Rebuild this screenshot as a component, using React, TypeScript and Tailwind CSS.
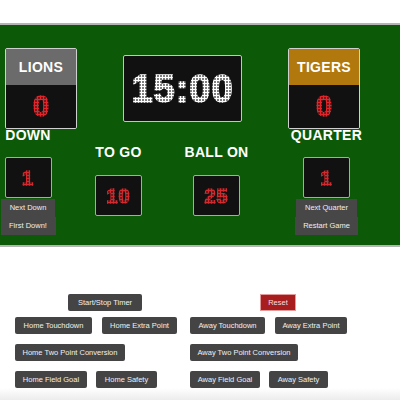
const dots =
  "[mask-image:radial-gradient(circle,#000_1.2px,transparent_1.6px)] [mask-size:3px_3px] [-webkit-text-stroke:1.5px_currentColor]";

const TeamBox = ({ name, score, header }: { name: string; score: number; header: string }) => (
  <div className="w-[72px] h-[81px] border border-[#d0d0d0] rounded-[2px] overflow-hidden flex flex-col">
    <div className={`h-[36px] ${header} flex items-center justify-center text-white font-bold text-[14px] tracking-[0.3px]`}>
      {name}
    </div>
    <div className="flex-1 bg-[#111] flex items-center justify-center">
      <span className={`text-[#e3262b] font-bold text-[29px] leading-none ${dots}`}>{score}</span>
    </div>
  </div>
);

const SmallBox = ({ value }: { value: number }) => (
  <div className="w-[47px] h-[41px] bg-[#111] border border-[#a9a9a9] rounded-[2px] flex items-center justify-center">
    <span className={`text-[#d42a2e] font-bold text-[20px] leading-none tracking-[1px] ${dots}`}>{value}</span>
  </div>
);

const Label = ({ text }: { text: string }) => (
  <div className="text-white font-bold text-[14px] leading-[14px] tracking-[0.3px] whitespace-nowrap">{text}</div>
);

const BoardButton = ({ text, w }: { text: string; w: string }) => (
  <button className={`${w} h-[18px] bg-[#474747] text-[#eee] text-[7.5px] flex items-center justify-center`}>
    {text}
  </button>
);

const Btn = ({ text, w }: { text: string; w: string }) => (
  <button
    className={`${w} h-[17px] bg-[#444] rounded-[2px] text-[#f0f0f0] text-[7.5px] flex items-center justify-center whitespace-nowrap`}
  >
    {text}
  </button>
);

export default function App() {
  return (
    <div className="w-[400px] h-[400px] bg-white overflow-hidden flex flex-col font-['Liberation_Sans',Arial,sans-serif]">
      <div className="mt-[23px] bg-[#0c5a07] border-y-2 border-[#b4b4b4] pt-[23px] pb-[10px]">
        {/* top row */}
        <div className="flex items-center pl-[5px]">
          <TeamBox name="LIONS" score={0} header="bg-[#6b6b6b]" />
          <div className="ml-[46px] w-[119px] h-[67px] bg-[#111] border border-[#c4c4c4] rounded-[2px] flex items-center justify-center">
            <span className={`text-white font-bold text-[38px] leading-none tracking-[1px] ${dots}`}>15:00</span>
          </div>
          <div className="ml-[46px]">
            <TeamBox name="TIGERS" score={0} header="bg-[#b1790d]" />
          </div>
        </div>

        {/* bottom row */}
        <div className="flex items-start -mt-[1px]">
          <div className="w-[56px] flex flex-col items-center">
            <Label text="DOWN" />
            <div className="mt-[15px]">
              <SmallBox value={1} />
            </div>
            <div className="mt-[1px] flex flex-col items-center">
              <BoardButton text="Next Down" w="w-[54px]" />
              <BoardButton text="First Down!" w="w-[55px]" />
            </div>
          </div>
          <div className="ml-[30px] mt-[17px] w-[65px] flex flex-col items-center">
            <Label text="TO GO" />
            <div className="mt-[16px]">
              <SmallBox value={10} />
            </div>
          </div>
          <div className="ml-[33px] mt-[17px] w-[65px] flex flex-col items-center">
            <Label text="BALL ON" />
            <div className="mt-[16px]">
              <SmallBox value={25} />
            </div>
          </div>
          <div className="ml-[42px] w-[71px] flex flex-col items-center">
            <Label text="QUARTER" />
            <div className="mt-[15px]">
              <SmallBox value={1} />
            </div>
            <div className="mt-[1px] flex flex-col items-center">
              <BoardButton text="Next Quarter" w="w-[61px]" />
              <BoardButton text="Restart Game" w="w-[63px]" />
            </div>
          </div>
        </div>
      </div>

      {/* controls */}
      <div className="mt-[47px] flex">
        <div className="ml-[68px]">
          <Btn text="Start/Stop Timer" w="w-[74px]" />
        </div>
        <button className="ml-[118px] w-[36px] h-[17px] bg-[#a81d1d] border border-[#e39a9a] text-[#f8dede] text-[7.5px] flex items-center justify-center">
          Reset
        </button>
      </div>
      <div className="mt-[6px] flex pl-[15px]">
        <div className="w-[175px] flex flex-col gap-[10px]">
          <div className="flex gap-[10px]">
            <Btn text="Home Touchdown" w="w-[77px]" />
            <Btn text="Home Extra Point" w="w-[75px]" />
          </div>
          <div className="flex">
            <Btn text="Home Two Point Conversion" w="w-[110px]" />
          </div>
          <div className="flex gap-[9px]">
            <Btn text="Home Field Goal" w="w-[72px]" />
            <Btn text="Home Safety" w="w-[61px]" />
          </div>
        </div>
        <div className="flex flex-col gap-[10px]">
          <div className="flex gap-[10px]">
            <Btn text="Away Touchdown" w="w-[75px]" />
            <Btn text="Away Extra Point" w="w-[72px]" />
          </div>
          <div className="flex">
            <Btn text="Away Two Point Conversion" w="w-[108px]" />
          </div>
          <div className="flex gap-[9px]">
            <Btn text="Away Field Goal" w="w-[70px]" />
            <Btn text="Away Safety" w="w-[59px]" />
          </div>
        </div>
      </div>
      <div className="mt-auto h-[12px] bg-gradient-to-b from-white to-[#ececec]" />
    </div>
  );
}
